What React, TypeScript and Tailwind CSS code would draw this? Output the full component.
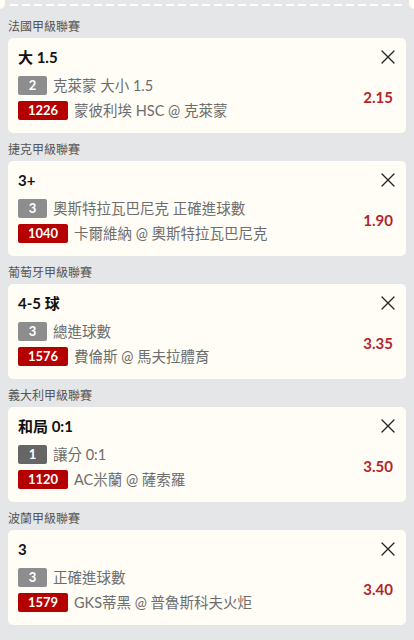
import React from "react";

interface Bet {
  league: string;
  pick: string;
  legNo: string;
  legColor: string;
  market: string;
  matchNo: string;
  match: string;
  odds: string;
}

const bets: Bet[] = [
  {
    league: "法國甲級聯賽",
    pick: "大 1.5",
    legNo: "2",
    legColor: "bg-[#8d8d8d]",
    market: "克萊蒙 大小 1.5",
    matchNo: "1226",
    match: "蒙彼利埃 HSC @ 克萊蒙",
    odds: "2.15",
  },
  {
    league: "捷克甲級聯賽",
    pick: "3+",
    legNo: "3",
    legColor: "bg-[#8d8d8d]",
    market: "奧斯特拉瓦巴尼克 正確進球數",
    matchNo: "1040",
    match: "卡爾維納 @ 奧斯特拉瓦巴尼克",
    odds: "1.90",
  },
  {
    league: "葡萄牙甲級聯賽",
    pick: "4-5 球",
    legNo: "3",
    legColor: "bg-[#8d8d8d]",
    market: "總進球數",
    matchNo: "1576",
    match: "費倫斯 @ 馬夫拉體育",
    odds: "3.35",
  },
  {
    league: "義大利甲級聯賽",
    pick: "和局 0:1",
    legNo: "1",
    legColor: "bg-[#666666]",
    market: "讓分 0:1",
    matchNo: "1120",
    match: "AC米蘭 @ 薩索羅",
    odds: "3.50",
  },
  {
    league: "波蘭甲級聯賽",
    pick: "3",
    legNo: "3",
    legColor: "bg-[#8d8d8d]",
    market: "正確進球數",
    matchNo: "1579",
    match: "GKS蒂黑 @ 普魯斯科夫火炬",
    odds: "3.40",
  },
];

const CloseIcon = () => (
  <svg width="14" height="14" viewBox="0 0 14 14" fill="none">
    <path d="M1 1L13 13M13 1L1 13" stroke="#222" strokeWidth="1.3" strokeLinecap="round" />
  </svg>
);

const BetCard = ({ bet }: { bet: Bet }) => (
  <div>
    <p className="text-[12px] leading-[16px] text-[#555] mb-[3px]">{bet.league}</p>
    <div className="bg-[#fffdf6] rounded-[5px] pl-[10px] pr-[13px] pt-[9px] pb-[13px] flex">
      <div className="flex-1 min-w-0">
        <h3 className="h-[20px] text-[15px] leading-[20px] font-bold text-[#111]">{bet.pick}</h3>
        <div className="mt-[9px] flex items-center gap-[6px] h-[19px]">
          <span
            className={`${bet.legColor} w-[29px] h-[19px] rounded-[2px] text-white text-[13px] font-bold flex items-center justify-center`}
          >
            {bet.legNo}
          </span>
          <span className="text-[14.5px] text-[#6d6d6d] leading-[19px] truncate">{bet.market}</span>
        </div>
        <div className="mt-[6px] flex items-center gap-[6px] h-[19px]">
          <span className="bg-[#b50000] w-[50px] h-[19px] rounded-[2px] text-white text-[13px] font-bold flex items-center justify-center">
            {bet.matchNo}
          </span>
          <span className="text-[14.5px] text-[#6d6d6d] leading-[19px] truncate">{bet.match}</span>
        </div>
      </div>
      <div className="flex flex-col items-end justify-between">
        <div className="h-[20px] flex items-center -mr-[2px]">
          <CloseIcon />
        </div>
        <span className="text-[15px] leading-[18px] font-bold text-[#b3252c] mb-[14px]">{bet.odds}</span>
      </div>
    </div>
  </div>
);

export default function App() {
  return (
    <div
      className="min-h-[640px] bg-[#e5e6e8] pb-4"
      style={{ fontFamily: 'Lato, "Noto Sans CJK TC", sans-serif' }}
    >
      <div className="flex items-start h-[10px]">
        <div className="w-[5px] h-[9px] bg-[#fffdf6] rounded-br-full" />
        <div className="flex-1 mx-[5px] mt-[4px] h-[2px] bg-[repeating-linear-gradient(90deg,#ffffff_0_8px,transparent_8px_12px)]" />
        <div className="w-[5px] h-[9px] bg-[#fffdf6] rounded-bl-full" />
      </div>
      <div className="px-2 pt-[9px] flex flex-col gap-[9px]">
        {bets.map((b) => (
          <BetCard key={b.matchNo} bet={b} />
        ))}
      </div>
    </div>
  );
}
